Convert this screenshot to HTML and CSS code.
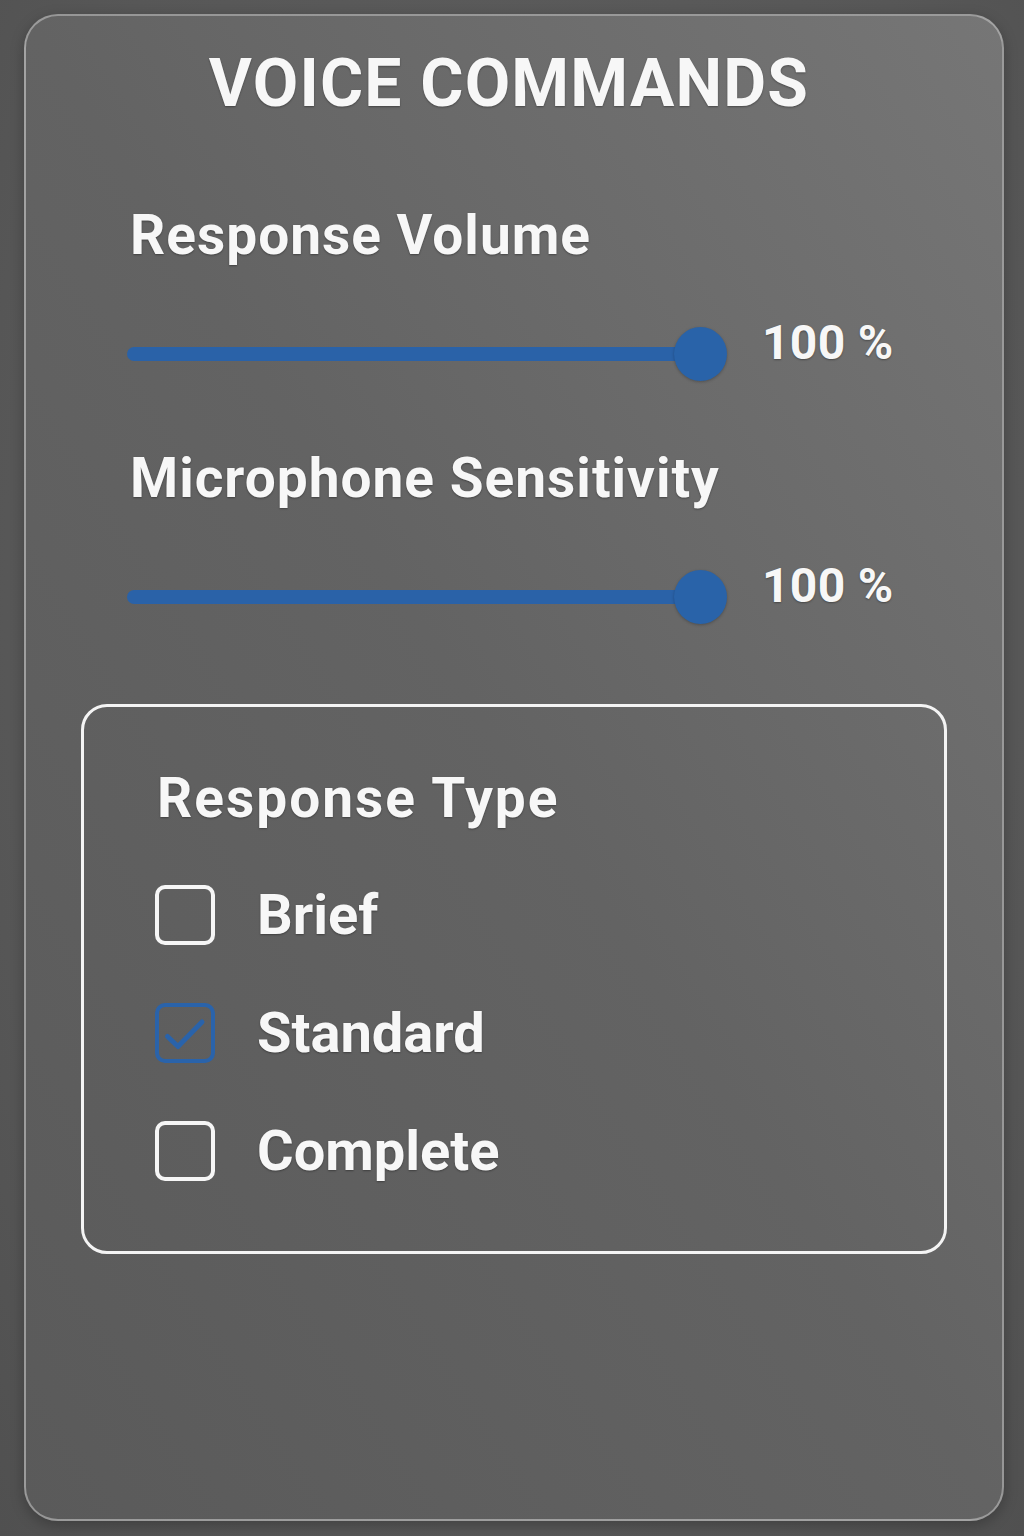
FILE: index.html
```html
<!DOCTYPE html>
<html lang="en">
<head>
<meta charset="utf-8">
<title>Voice Commands</title>
<link rel="stylesheet" href="styles.css">
</head>
<body>
<main class="card">
  <h1 class="title">VOICE COMMANDS</h1>

  <section class="setting setting-first">
    <h2 class="label">Response Volume</h2>
    <div class="slider-row">
      <div class="slider" role="slider" aria-valuenow="100">
        <div class="track"></div>
        <div class="thumb"></div>
      </div>
      <span class="value">100 %</span>
    </div>
  </section>

  <section class="setting">
    <h2 class="label">Microphone Sensitivity</h2>
    <div class="slider-row">
      <div class="slider" role="slider" aria-valuenow="100">
        <div class="track"></div>
        <div class="thumb"></div>
      </div>
      <span class="value">100 %</span>
    </div>
  </section>

  <section class="type-box">
    <h2 class="label type-label">Response Type</h2>
    <ul class="options">
      <li class="option">
        <span class="check"></span>
        <span class="option-text">Brief</span>
      </li>
      <li class="option">
        <span class="check checked">
          <svg viewBox="0 0 60 60" width="60" height="60" aria-hidden="true">
            <polyline points="12.5,33.5 23,43.5 47,19" fill="none" stroke="#2a63aa" stroke-width="5" stroke-linecap="round" stroke-linejoin="round"/>
          </svg>
        </span>
        <span class="option-text">Standard</span>
      </li>
      <li class="option">
        <span class="check"></span>
        <span class="option-text">Complete</span>
      </li>
    </ul>
  </section>
</main>
</body>
</html>
```

FILE: styles.css
```css
* {
  box-sizing: border-box;
}

html, body {
  margin: 0;
  padding: 0;
}

body {
  width: 1024px;
  height: 1536px;
  overflow: hidden;
  background: radial-gradient(ellipse at 50% 40%, #5f5f5f 0%, #575757 70%, #505050 100%);
  font-family: Roboto, "Liberation Sans", Arial, sans-serif;
  color: #f7f7f7;
  padding-top: 14px;
  padding-left: 24px;
}

.card {
  width: 980px;
  height: 1507px;
  border: 2px solid rgba(200, 200, 200, 0.55);
  border-radius: 34px;
  background: linear-gradient(to top right, #5a5a5a 0%, #636363 50%, #767676 100%);
  box-shadow: 0 4px 14px rgba(0, 0, 0, 0.25);
  padding: 35px 0 0 101px;
  display: flex;
  flex-direction: column;
  align-items: flex-start;
}

.title {
  margin: 0 0 0 -101px;
  width: 976px;
  text-align: center;
  font-size: 66px;
  line-height: 66px;
  font-weight: 700;
  letter-spacing: 1.2px;
  padding-right: 10px;
  text-shadow: 0 1px 2px rgba(0, 0, 0, 0.35);
}

.label {
  margin: 0 0 0 3px;
  font-size: 55px;
  line-height: 55px;
  font-weight: 700;
  letter-spacing: 1px;
  text-shadow: 0 1px 2px rgba(0, 0, 0, 0.35);
}

.type-label {
  margin-left: 2px;
  letter-spacing: 2px;
}

.setting {
  display: flex;
  flex-direction: column;
  margin-top: 70px;
}

.setting-first {
  margin-top: 91px;
}

.slider-row {
  display: flex;
  align-items: flex-start;
  margin-top: 56px;
}

.slider {
  position: relative;
  width: 600px;
  height: 54px;
  margin-top: 8px;
}

.track {
  position: absolute;
  left: 0;
  right: 27px;
  top: 20px;
  height: 14px;
  border-radius: 7px;
  background: #2a62a8;
}

.thumb {
  position: absolute;
  right: 0;
  top: 0;
  width: 53px;
  height: 54px;
  border-radius: 50%;
  background: #2963a9;
  box-shadow: 0 1px 3px rgba(0, 0, 0, 0.25);
}

.value {
  margin-left: 35px;
  font-size: 48px;
  line-height: 48px;
  font-weight: 700;
  letter-spacing: 0.3px;
  text-shadow: 0 1px 2px rgba(0, 0, 0, 0.35);
}

.type-box {
  margin: 80px 0 0 -46px;
  width: 866px;
  height: 550px;
  border: 3px solid #f4f4f4;
  border-radius: 26px;
  padding: 64px 0 0 71px;
}

.options {
  list-style: none;
  margin: 59px 0 0 0;
  padding: 0;
  display: flex;
  flex-direction: column;
  gap: 58px;
}

.option {
  display: flex;
  align-items: center;
  height: 60px;
}

.check {
  width: 60px;
  height: 60px;
  border: 4px solid #f6f6f6;
  border-radius: 10px;
  position: relative;
  flex: none;
}

.check.checked {
  border-color: #2a63aa;
}

.check svg {
  position: absolute;
  left: -4px;
  top: -4px;
}

.option-text {
  margin-left: 42px;
  font-size: 56px;
  line-height: 56px;
  font-weight: 700;
  letter-spacing: 0;
  text-shadow: 0 1px 2px rgba(0, 0, 0, 0.35);
}
```
